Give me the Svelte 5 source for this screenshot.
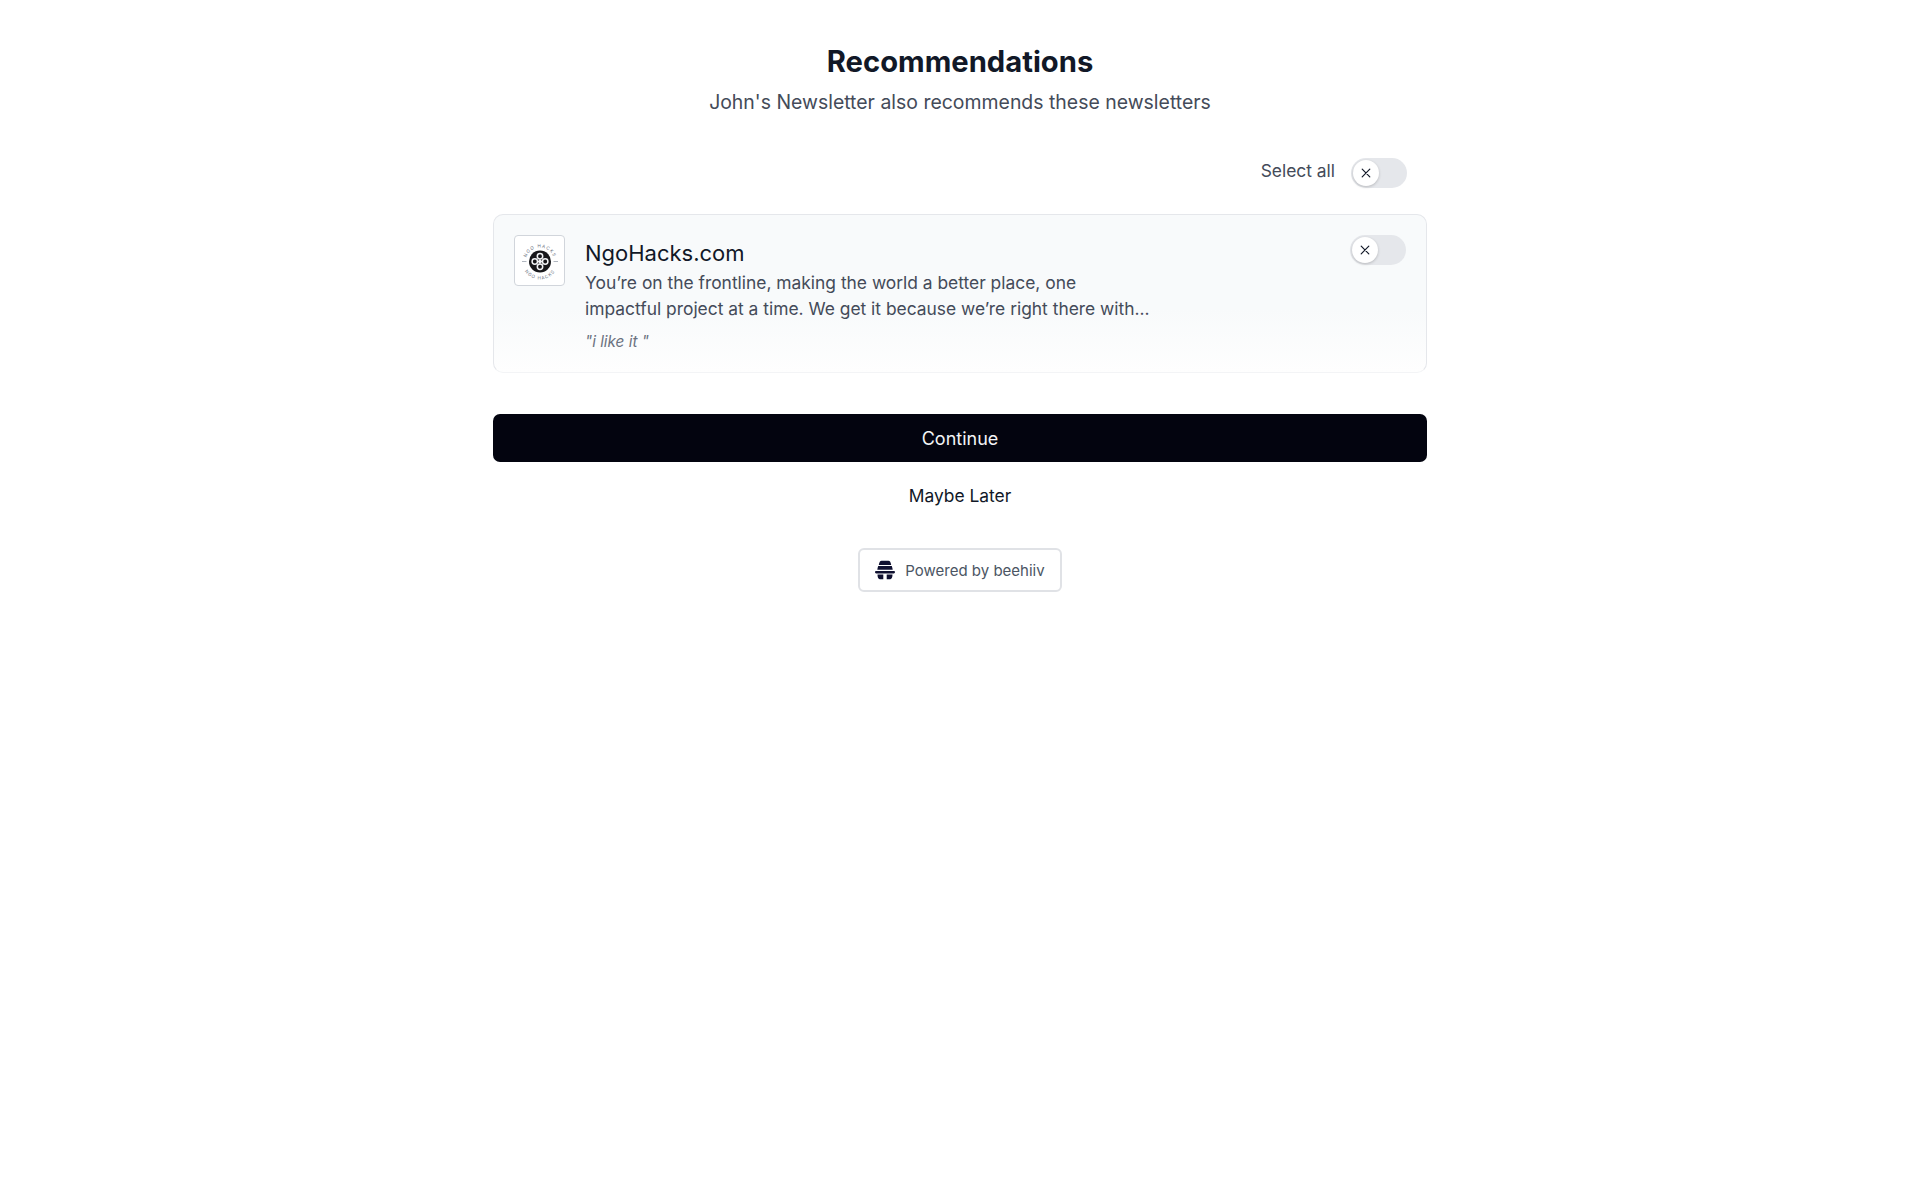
<script>
  let selectAll = $state(false);
  let selected = $state(false);
</script>

<main class="page">
  <header class="head">
    <h1>Recommendations</h1>
    <p>John's Newsletter also recommends these newsletters</p>
  </header>

  <div class="select-row">
    <span class="select-label">Select all</span>
    <button type="button" class="toggle" aria-label="Select all" aria-pressed={selectAll} onclick={() => (selectAll = !selectAll)}>
      <span class="knob">
        <svg viewBox="0 0 12 12" width="12" height="12" fill="none" stroke="currentColor" stroke-width="1.2" stroke-linecap="round" aria-hidden="true">
          <path d="M2.2 2.2l7.6 7.6M9.8 2.2l-7.6 7.6"></path>
        </svg>
      </span>
    </button>
  </div>

  <section class="card">
    <div class="logo">
      <svg viewBox="0 0 48 48" width="48" height="48" aria-hidden="true">
        <defs>
          <path id="ring-top" d="M10 24.500a14 14 0 0 1 28 0"></path>
          <path id="ring-bottom" d="M6 24.500a18 18 0 0 0 36 0"></path>
        </defs>
        <text class="ring-text"><textPath href="#ring-top" startOffset="50%" text-anchor="middle">NGO HACKS</textPath></text>
        <text class="ring-text"><textPath href="#ring-bottom" startOffset="50%" text-anchor="middle">NGO HACKS</textPath></text>
        <path d="M6 24.500h4.500M37.500 24.500H42" stroke="#9ca3af" stroke-width="0.8"></path>
        <circle cx="24" cy="24.500" r="11" fill="#17171a"></circle>
        <g fill="none" stroke="#f3f4f6" stroke-width="1.500">
          <circle cx="24" cy="19.300" r="2.700"></circle>
          <circle cx="24" cy="29.700" r="2.700"></circle>
          <circle cx="18.800" cy="24.500" r="2.700"></circle>
          <circle cx="29.200" cy="24.500" r="2.700"></circle>
        </g>
        <rect x="22.300" y="22.800" width="3.400" height="3.400" transform="rotate(45 24 24.500)" fill="#f3f4f6"></rect>
      </svg>
    </div>
    <div class="body">
      <h2>NgoHacks.com</h2>
      <p class="desc">You’re on the frontline, making the world a better place, one impactful project at a time. We get it because we’re right there with...</p>
      <p class="quote">"i like it "</p>
    </div>
    <button type="button" class="toggle" aria-label="Select NgoHacks.com" aria-pressed={selected} onclick={() => (selected = !selected)}>
      <span class="knob">
        <svg viewBox="0 0 12 12" width="12" height="12" fill="none" stroke="currentColor" stroke-width="1.2" stroke-linecap="round" aria-hidden="true">
          <path d="M2.2 2.2l7.6 7.6M9.8 2.2l-7.6 7.6"></path>
        </svg>
      </span>
    </button>
  </section>

  <div class="actions">
    <button type="button" class="continue">Continue</button>
    <button type="button" class="later">Maybe Later</button>
  </div>

  <div class="powered-wrap">
    <div class="powered">
      <svg viewBox="0 0 20 20" width="20" height="20" fill="#0f1030" aria-hidden="true">
        <path d="M6.500 .8h7c1.300 0 2.300 1.500 2.700 4.200H3.800C4.200 2.300 5.200 .8 6.500 .8z"></path>
        <path d="M3.200 6h13.600c.4 1 .7 2.200.9 3.800H2.300c.2-1.600.5-2.800.9-3.800z"></path>
        <path d="M1.200 10.900h17.600c.7 0 1.200.5 1.200 1.200 0 .8-.5 1.300-1.200 1.300H1.200C.5 13.400 0 12.900 0 12.100c0-.7.500-1.200 1.200-1.200z"></path>
        <path d="M2.500 14.500h5.800v4.700H4.700c-1.300 0-2.200-1.900-2.200-4.700zM11.700 14.500h5.800c0 2.800-.9 4.700-2.200 4.700h-3.600z"></path>
      </svg>
      <span>Powered by beehiiv</span>
    </div>
  </div>
</main>

<style>
  :global(body) {
    margin: 0;
    background: #fff;
  }

  .page {
    box-sizing: border-box;
    width: 934px;
    margin: 0 auto;
    padding-top: 44px;
    font-family: Inter, "Liberation Sans", sans-serif;
    color: #111827;
  }

  .head {
    text-align: center;
  }

  h1 {
    margin: 0;
    font-size: 29.2px;
    line-height: 36px;
    font-weight: 700;
    color: #111827;
  }

  .head p {
    margin: 8px 0 0;
    font-size: 19.45px;
    line-height: 28px;
    color: #444b59;
  }

  .select-row {
    display: flex;
    justify-content: flex-end;
    align-items: center;
    gap: 16px;
    margin-top: 42px;
    padding-right: 20px;
    font-size: 17.4px;
    line-height: 28px;
    color: #444b59;
  }

  .select-label {
    margin-top: -5px;
  }

  .toggle {
    flex: none;
    display: flex;
    align-items: center;
    width: 56px;
    height: 30px;
    padding: 2px;
    border: 0;
    border-radius: 999px;
    background: #e5e7eb;
    cursor: pointer;
  }

  .knob {
    display: flex;
    align-items: center;
    justify-content: center;
    width: 26px;
    height: 26px;
    border-radius: 50%;
    background: #fff;
    color: #111827;
    box-shadow: 0 1px 3px rgba(0, 0, 0, 0.2);
  }

  .card {
    display: flex;
    align-items: flex-start;
    gap: 20px;
    margin-top: 26px;
    padding: 20px 20px 20px 21px;
    height: 159px;
    box-sizing: border-box;
    border: 1px solid #e5e7eb;
    border-bottom-color: #f3f4f6;
    border-radius: 10px;
    background: linear-gradient(#f8fafb 60%, #fefefe);
  }

  .logo {
    flex: none;
    display: flex;
    align-items: center;
    justify-content: center;
    width: 51px;
    height: 51px;
    margin-left: -1px;
    box-sizing: border-box;
    border: 1px solid #d1d5db;
    border-radius: 4px;
    background: #fff;
  }

  .ring-text {
    font-size: 4.5px;
    letter-spacing: 1px;
    fill: #6b7280;
  }

  .body {
    flex: 1;
    min-width: 0;
    padding-top: 2px;
  }

  h2 {
    margin: 0;
    font-size: 22px;
    line-height: 33px;
    font-weight: 400;
    color: #111827;
  }

  .desc {
    margin: 0;
    max-width: 568px;
    font-size: 17.4px;
    line-height: 26px;
    color: #444b59;
  }

  .quote {
    margin: 10px 0 0;
    font-size: 15.3px;
    line-height: 20px;
    font-style: italic;
    color: #6b7280;
  }

  .actions {
    display: flex;
    flex-direction: column;
    align-items: center;
    margin-top: 41px;
  }

  .continue {
    width: 100%;
    height: 48px;
    border: 0;
    border-radius: 7px;
    background: #03040f;
    color: #f3f4f6;
    font: inherit;
    font-size: 18px;
    cursor: pointer;
  }

  .later {
    margin-top: 20px;
    padding: 0;
    border: 0;
    background: none;
    color: #111827;
    font: inherit;
    font-size: 17.4px;
    line-height: 28px;
    cursor: pointer;
  }

  .powered-wrap {
    display: flex;
    justify-content: center;
    margin-top: 38px;
  }

  .powered {
    display: flex;
    align-items: center;
    gap: 10px;
    height: 44px;
    box-sizing: border-box;
    padding: 0 15px;
    border: 2px solid #e0e2e6;
    border-radius: 6px;
    font-size: 15px;
    color: #4b5563;
  }
</style>
